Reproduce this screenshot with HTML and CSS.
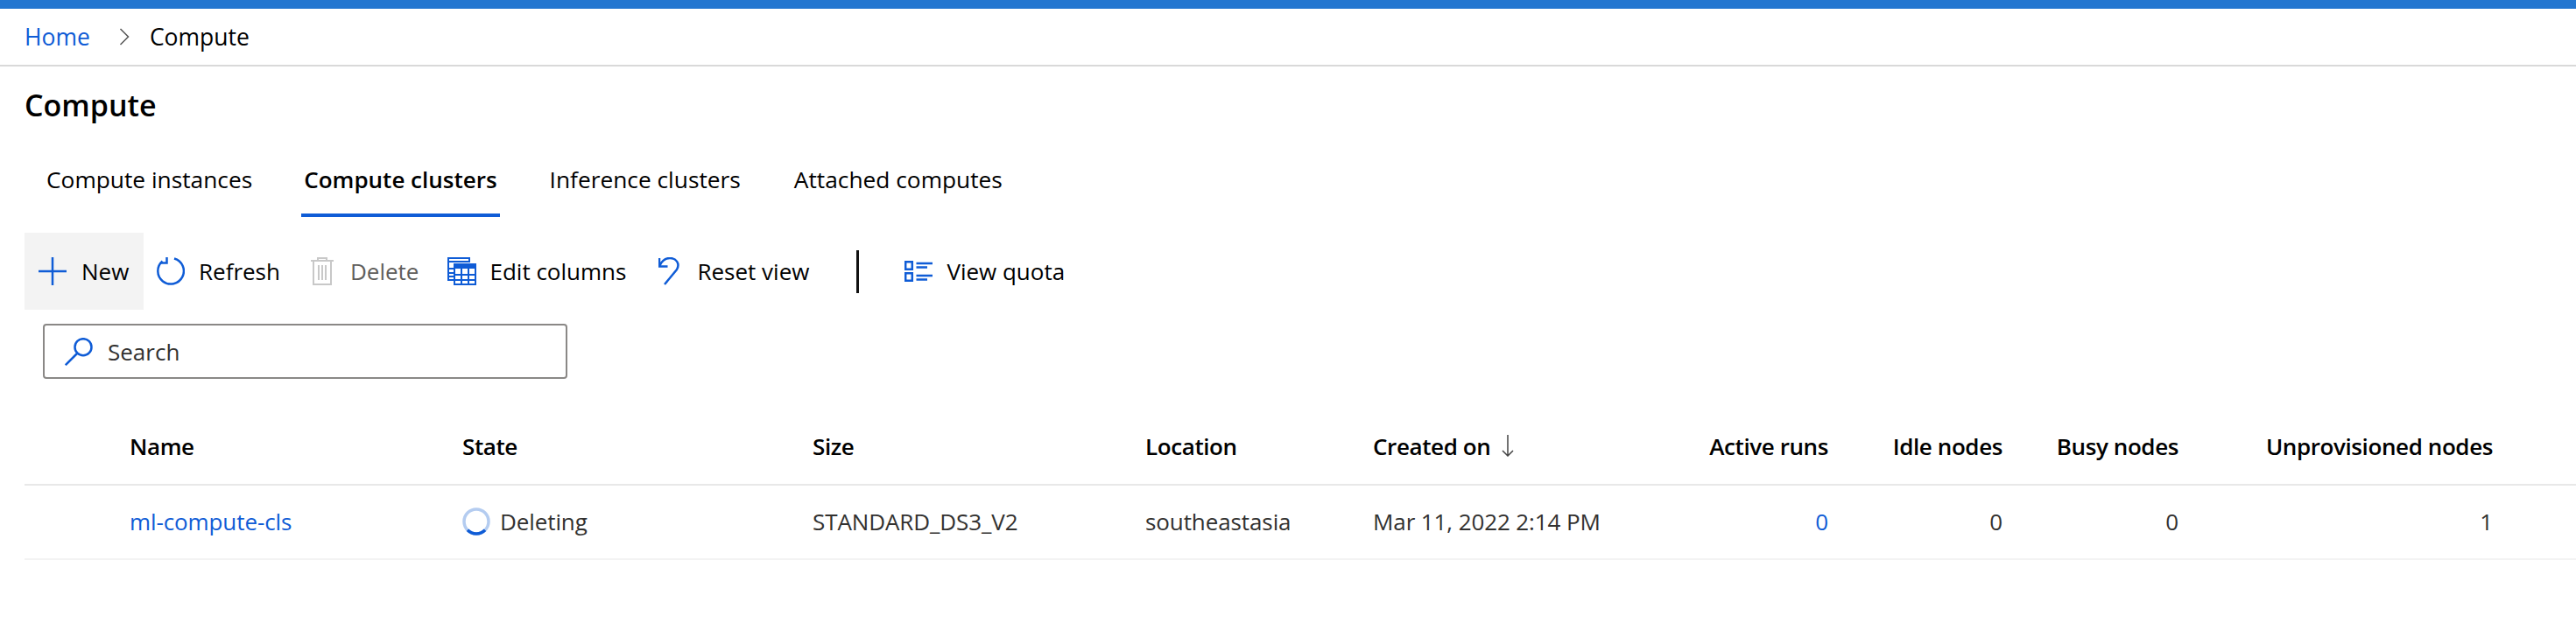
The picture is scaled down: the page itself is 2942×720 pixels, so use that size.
FILE: index.html
```html
<!DOCTYPE html>
<html lang="en">
<head>
<meta charset="utf-8">
<title>Compute</title>
<link rel="stylesheet" href="styles.css">
</head>
<body>
<div class="topbar"></div>
<nav class="crumbs">
  <a class="crumb-link">Home</a>
  <svg class="crumb-sep" viewBox="0 0 12 20"><path d="M1.500 1 10.500 10l-9 9"/></svg>
  <span class="crumb-cur">Compute</span>
</nav>
<main class="page">
  <h1 class="title">Compute</h1>
  <div class="tabs">
    <span class="tab t1">Compute instances</span>
    <span class="tab t2 active">Compute clusters</span>
    <span class="tab t3">Inference clusters</span>
    <span class="tab t4">Attached computes</span>
  </div>
  <div class="toolbar">
    <button class="cmd new">
      <svg class="ic" width="32" height="32" viewBox="0 0 32 32"><path d="M16 0v32M0 16h32"/></svg>
      <span>New</span>
    </button>
    <button class="cmd refresh">
      <svg class="ic" width="32" height="32" viewBox="0 0 32 32"><path d="M20 1.500A14.800 14.800 0 1 1 6.500 4.500"/><path d="M11.500 0v6.500H4.500"/></svg>
      <span>Refresh</span>
    </button>
    <button class="cmd del" disabled>
      <svg class="ic grey" width="26" height="32" viewBox="0 0 26 32"><path d="M0 4h26M8 4V1h10v3M3 4v27h20V4M9 9v17M13 9v17M17 9v17"/></svg>
      <span>Delete</span>
    </button>
    <button class="cmd edit">
      <svg class="ic thin" width="33" height="32" viewBox="0 0 33 32"><path d="M1 9V1h24v5M1 5h24M1 9v17h6M1 13h6M1 18h6M1 22h6"/><path d="M8 8h24v23H8zM8 20h24M8 26h24M16 13v18M24 13v18"/><path class="fill" d="M8 7h24v6H8z"/></svg>
      <span>Edit columns</span>
    </button>
    <button class="cmd reset">
      <svg class="ic" width="24" height="32" viewBox="0 0 24 32"><path d="M7 31 21 14C25 7 20 1 13 1 8 1 4 4 1.500 9.500"/><path d="M1 1v9.500h9.500"/></svg>
      <span>Reset view</span>
    </button>
    <span class="divider"></span>
    <button class="cmd quota">
      <svg class="ic" width="32" height="24" viewBox="0 0 32 24"><path d="M1.200 1.200h7.600v8.600H1.200zM1.200 14.200h7.600v8.600H1.200zM13.500 3H32M13.500 7.500H26M13.500 17H32M13.500 21.500H26"/></svg>
      <span>View quota</span>
    </button>
  </div>
  <div class="search">
    <svg class="ic" width="32" height="32" viewBox="0 0 32 32"><circle cx="21" cy="10.700" r="9.500"/><path d="M14 18 .8 31.200"/></svg>
    <span>Search</span>
  </div>
  <div class="grid head">
    <span class="c-name">Name</span>
    <span>State</span>
    <span>Size</span>
    <span>Location</span>
    <span class="created">Created on
      <svg class="sort" width="14" height="25" viewBox="0 0 14 25"><path d="M7 0v24M1 18l6 6 6-6"/></svg>
    </span>
    <span class="num">Active runs</span>
    <span class="num">Idle nodes</span>
    <span class="num">Busy nodes</span>
    <span class="num">Unprovisioned nodes</span>
  </div>
  <div class="grid row">
    <a class="c-name link">ml-compute-cls</a>
    <span class="state">
      <svg class="spin" width="32" height="32" viewBox="0 0 32 32"><circle class="track" cx="16" cy="16" r="14"/><path class="arc" d="M6 25.800a14 14 0 0 0 20 0"/></svg>
      Deleting
    </span>
    <span>STANDARD_DS3_V2</span>
    <span>southeastasia</span>
    <span>Mar 11, 2022 2:14 PM</span>
    <span class="num link">0</span>
    <span class="num">0</span>
    <span class="num">0</span>
    <span class="num">1</span>
  </div>
</main>
</body>
</html>
```
FILE: styles.css
```css
* { box-sizing: border-box; }
html, body { margin: 0; background: #fff; }
body { font-family: "Open Sans", "Noto Sans", sans-serif; font-size: 26px; color: #000; overflow: hidden; }
.topbar { height: 10px; background: #2376d0; }
.crumbs { height: 66px; border-bottom: 2px solid #d9d9d9; display: flex; align-items: center; padding: 0 0 0 28px; font-size: 26.500px; }
.crumb-link { color: #0f5cd6; }
.crumb-sep { width: 12px; height: 20px; margin: 0 23px 0 33px; fill: none; stroke: #555; stroke-width: 1.500; }
.crumb-cur { color: #000; }
.page { padding-left: 28px; }
.title { margin: 0; height: 90px; display: flex; align-items: center; font-size: 34px; font-weight: 600; padding-bottom: 2px; }
.tabs { display: flex; height: 82px; position: relative; padding-top: 20px; font-size: 26.300px; }
.tab { height: 62px; padding: 0 3px; line-height: 38px; position: relative; white-space: nowrap; }
.t1 { margin-left: 22px; }
.t2 { margin-left: 53px; font-weight: 600; font-size: 26px; }
.t3 { margin-left: 54px; }
.t4 { margin-left: 55px; }
.active { border-bottom: 4px solid #0f5cd6; }
.toolbar { display: flex; align-items: center; height: 88px; margin-top: 18px; }
.cmd { display: flex; align-items: center; height: 88px; padding: 0; border: 0; background: none; font: inherit; color: #000; white-space: nowrap; }
.new { background: #f3f3f3; width: 136px; padding-left: 16px; gap: 17px; }
.refresh { margin-left: 15px; gap: 16px; }
.del { margin-left: 35px; gap: 19px; color: #605e5c; }
.edit { margin-left: 33px; gap: 15px; }
.reset { margin-left: 37px; gap: 20px; }
.quota { margin-left: 52px; gap: 16px; }
.divider { width: 3px; height: 49px; background: #111; margin-left: 54px; }
.ic { flex: none; fill: none; stroke: #0f5cd6; stroke-width: 2.500; }
.ic.thin { stroke-width: 2; }
.ic.grey { stroke: #c8c8c8; stroke-width: 2; }
.ic .fill { fill: #0f5cd6; stroke: none; }
.search { width: 599px; height: 63px; margin: 16px 0 0 21px; border: 2px solid #8a8886; border-radius: 4px; display: flex; align-items: center; padding-left: 23px; gap: 17px; color: #323130; }
.grid { display: grid; grid-template-columns: 120px 380px 400px 380px 260px 332px 188px 199px 201px 359px 1fr; align-items: center; }
.head { height: 100px; margin-top: 22px; padding-top: 11px; border-bottom: 2px solid #e8e8e8; font-weight: 600; letter-spacing: -0.400px; }
.row { height: 85px; padding-bottom: 2px; border-bottom: 2px solid #f3f3f3; color: #323130; letter-spacing: -0.100px; }
.grid > span, .grid > a { white-space: nowrap; }
.c-name { grid-column: 2; }
.link { color: #0f5cd6; }
.num { text-align: right; }
.created { display: flex; align-items: center; gap: 13px; }
.sort { fill: none; stroke: #444; stroke-width: 1.500; }
.state { display: flex; align-items: center; gap: 11px; }
.spin { fill: none; stroke-width: 3.500; }
.track { stroke: #b4ccf0; }
.arc { stroke: #0f5cd6; }
```
